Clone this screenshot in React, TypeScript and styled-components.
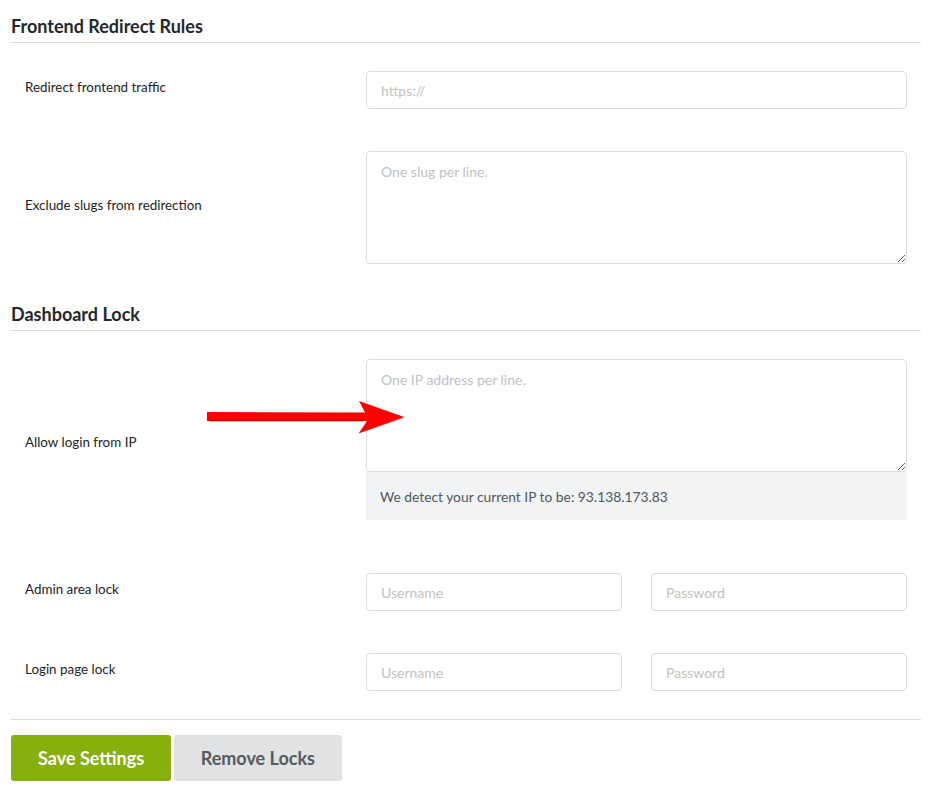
import styled, { createGlobalStyle } from 'styled-components';

const GlobalStyle = createGlobalStyle`
  body {
    margin: 0;
    background: #fff;
    font-family: Lato, "Open Sans", Arial, sans-serif;
  }
`;

const Page = styled.div`
  padding: 0 12px 20px 11px;
  color: #1e1e1e;
`;

const SectionTitle = styled.h2<{ $first?: boolean }>`
  margin: ${({ $first }) => ($first ? 14 : 17)}px 0 7px;
  padding-bottom: 4px;
  border-bottom: 1px solid #dcdcde;
  font-size: 18px;
  line-height: 24px;
  font-weight: 700;
  color: #23282d;
`;

const Row = styled.div`
  position: relative;
  display: grid;
  grid-template-columns: 341px 541px;
  align-items: center;
  padding: 21px 14px;
`;

const Label = styled.label`
  padding-bottom: 6px;
  font-size: 13.4px;
  line-height: 18px;
  color: #1d2327;
`;

const fieldBase = `
  box-sizing: border-box;
  width: 100%;
  border: 1px solid #dddddd;
  border-radius: 4px;
  background: #fff;
  font-family: Lato, "Open Sans", Arial, sans-serif;
  font-size: 14px;
  color: #333;
  outline: none;

  &::placeholder {
    color: #c0c1c4;
  }
`;

const TextInput = styled.input`
  ${fieldBase}
  height: 38px;
  padding: 0 14px;
`;

const TextArea = styled.textarea`
  ${fieldBase}
  display: block;
  height: 113px;
  padding: 11px 14px;
  line-height: 18px;
  resize: vertical;
`;

const FieldStack = styled.div``;

const Notice = styled.div`
  display: flex;
  align-items: center;
  height: 48px;
  margin-bottom: 11px;
  padding: 0 14px;
  background: #f2f3f5;
  font-size: 13.8px;
  color: #50575e;
`;

const Pair = styled.div`
  display: grid;
  grid-template-columns: 1fr 1fr;
  gap: 29px;
`;

const Footer = styled.div`
  display: flex;
  gap: 3px;
  margin-top: 7px;
  padding-top: 15px;
  border-top: 1px solid #dcdcde;
`;

const Button = styled.button<{ $primary?: boolean }>`
  height: 46px;
  padding: 0 ${({ $primary }) => ($primary ? 27 : 26.5)}px;
  border: none;
  border-radius: 3px;
  background: ${({ $primary }) => ($primary ? '#88b00a' : '#e1e2e4')};
  color: ${({ $primary }) => ($primary ? '#fff' : '#555a60')};
  font-family: Lato, "Open Sans", Arial, sans-serif;
  font-size: 18px;
  font-weight: 700;
  cursor: pointer;
`;

const Arrow = styled.svg`
  position: absolute;
  left: 196px;
  top: 62px;
  pointer-events: none;
`;

const PointerArrow = () => (
  <Arrow width="200" height="36" viewBox="0 0 200 36">
    <polygon points="0,12 158,12.5 152,1 197,17 152,33 160,21 0,21" fill="#ff0000" />
    <line x1="2" y1="21" x2="156" y2="21" stroke="#7a0000" strokeWidth="1" opacity="0.6" />
    <line x1="152" y1="33" x2="197" y2="17.5" stroke="#7a0000" strokeWidth="1" opacity="0.5" />
  </Arrow>
);

const App = () => (
  <>
    <GlobalStyle />
    <Page>
      <SectionTitle $first>Frontend Redirect Rules</SectionTitle>
      <Row>
        <Label>Redirect frontend traffic</Label>
        <TextInput placeholder="https://" />
      </Row>
      <Row>
        <Label>Exclude slugs from redirection</Label>
        <TextArea placeholder="One slug per line." />
      </Row>

      <SectionTitle>Dashboard Lock</SectionTitle>
      <Row>
        <PointerArrow />
        <Label>Allow login from IP</Label>
        <FieldStack>
          <TextArea placeholder="One IP address per line." />
          <Notice>We detect your current IP to be: 93.138.173.83</Notice>
        </FieldStack>
      </Row>
      <Row>
        <Label>Admin area lock</Label>
        <Pair>
          <TextInput placeholder="Username" />
          <TextInput type="password" placeholder="Password" />
        </Pair>
      </Row>
      <Row>
        <Label>Login page lock</Label>
        <Pair>
          <TextInput placeholder="Username" />
          <TextInput type="password" placeholder="Password" />
        </Pair>
      </Row>

      <Footer>
        <Button $primary>Save Settings</Button>
        <Button>Remove Locks</Button>
      </Footer>
    </Page>
  </>
);

export default App;
